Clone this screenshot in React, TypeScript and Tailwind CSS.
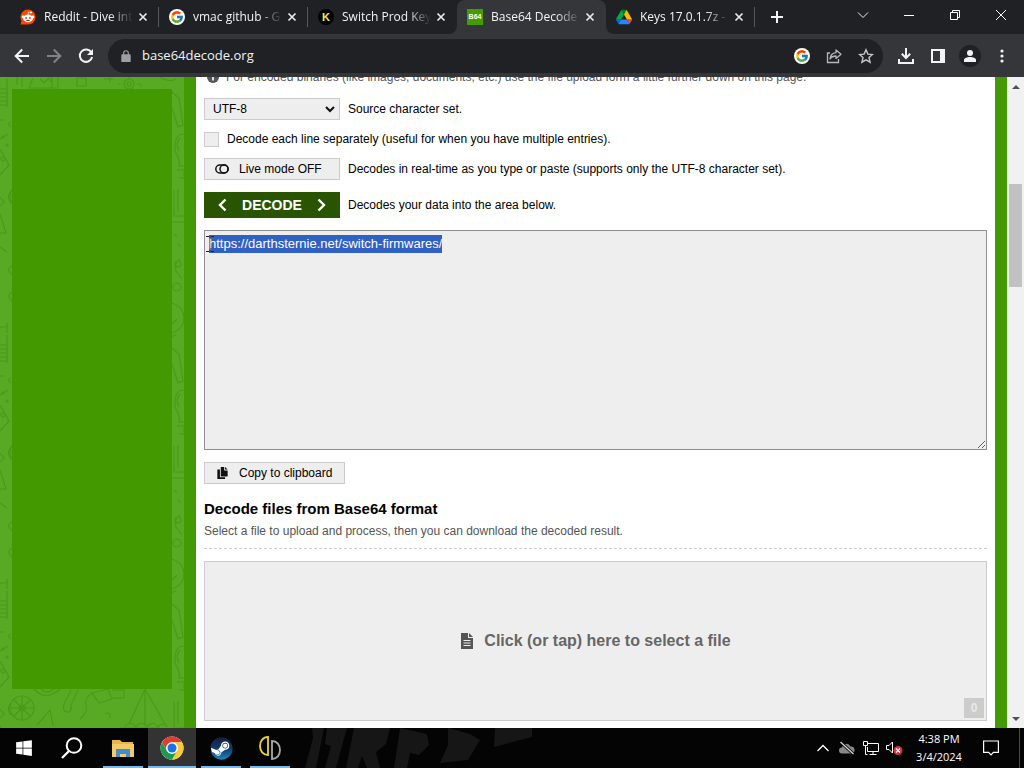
import { useEffect, useRef, type ReactNode } from 'react';
import { FcGoogle } from 'react-icons/fc';
import { FaWindows, FaSteam } from 'react-icons/fa';

type TabProps = { icon: ReactNode; title: string; active?: boolean; divider?: boolean };

function CloseGlyph() {
  return (
    <svg viewBox="0 0 16 16" className="size-4" fill="none" stroke="#e8eaed" strokeWidth="1.7">
      <path d="M4.500 4.500l7 7M11.500 4.500l-7 7" />
    </svg>
  );
}

function Tab({ icon, title, active, divider }: TabProps) {
  return (
    <div className={active ? 'relative flex w-[149px] items-center bg-[#35363a] rounded-t-lg pl-2.5' : 'flex w-[149px] items-center pl-2.5'}>
      {active && (
        <>
          <svg className="absolute bottom-0 -left-2 size-2" viewBox="0 0 8 8"><path d="M8 0v8H0A8 8 0 0 0 8 0z" fill="#35363a" /></svg>
          <svg className="absolute bottom-0 -right-2 size-2" viewBox="0 0 8 8"><path d="M0 0v8h8A8 8 0 0 1 0 0z" fill="#35363a" /></svg>
        </>
      )}
      <span className="flex size-4 shrink-0">{icon}</span>
      <span className="ml-2 min-w-0 flex-1 whitespace-nowrap text-xs text-[#f1f3f4] [mask-image:linear-gradient(to_right,black_72%,transparent_98%)]">
        {title}
      </span>
      <button aria-label={`Close ${title}`} className="mr-[7px] shrink-0"><CloseGlyph /></button>
      <span className={divider ? 'h-5 w-px bg-[#55575b]' : 'h-5 w-px'} />
    </div>
  );
}

function RedditIcon() {
  return (
    <svg viewBox="0 0 16 16" className="size-4">
      <circle cx="8" cy="8" r="7.6" fill="#ff4500" />
      <path d="M.5 15.600l1.500-5 5 5z" fill="#ff4500" />
      <circle cx="3.2" cy="7.8" r="1.5" fill="#fff" />
      <circle cx="12.8" cy="7.8" r="1.5" fill="#fff" />
      <ellipse cx="8" cy="9.4" rx="5" ry="3.8" fill="#fff" />
      <circle cx="11" cy="3.5" r="1.1" fill="#fff" />
      <path d="M8 5.8l.6-2.8 2.4.5" stroke="#fff" strokeWidth=".7" fill="none" />
      <circle cx="6.1" cy="8.9" r="1" fill="#ff4500" />
      <circle cx="9.9" cy="8.9" r="1" fill="#ff4500" />
      <path d="M5.6 11q2.4 2 4.8 0z" fill="#222" />
    </svg>
  );
}

function GoogleBadge() {
  return (
    <span className="flex size-4 items-center justify-center rounded-full bg-white">
      <FcGoogle className="size-3.5" />
    </span>
  );
}

function DriveIcon() {
  return (
    <svg viewBox="0 0 87.3 78" className="size-4">
      <path d="m6.6 66.85 3.85 6.65c.8 1.4 1.95 2.5 3.3 3.3l13.75-23.8h-27.5c0 1.55.4 3.1 1.2 4.5z" fill="#0066da" />
      <path d="m43.65 25-13.75-23.8c-1.35.8-2.5 1.9-3.3 3.3l-25.4 44a9.06 9.06 0 0 0-1.2 4.5h27.5z" fill="#00ac47" />
      <path d="m73.55 76.8c1.35-.8 2.5-1.9 3.3-3.3l1.6-2.75 7.65-13.25c.8-1.4 1.2-2.95 1.2-4.5h-27.5l5.85 11.5z" fill="#ea4335" />
      <path d="m43.65 25 13.75-23.8c-1.35-.8-2.9-1.2-4.5-1.2h-18.5c-1.6 0-3.15.45-4.5 1.2z" fill="#00832d" />
      <path d="m59.8 53h-32.3l-13.75 23.8c1.35.8 2.9 1.2 4.5 1.2h50.8c1.6 0 3.15-.45 4.5-1.2z" fill="#2684fc" />
      <path d="m73.4 26.5-12.7-22c-.8-1.4-1.95-2.5-3.3-3.3l-13.75 23.8 16.15 28h27.45c0-1.55-.4-3.1-1.2-4.5z" fill="#ffba00" />
    </svg>
  );
}

function TabStrip() {
  const control = 'flex h-[29px] w-[46px] items-center justify-center';
  return (
    <div className="flex h-[34px] bg-[#202124] pl-2.5">
      <Tab icon={<RedditIcon />} title="Reddit - Dive int" divider />
      <Tab icon={<GoogleBadge />} title="vmac github - G" divider />
      <Tab
        icon={<span className="flex size-4 items-center justify-center rounded-full bg-black font-['Liberation_Sans'] text-[11px] font-bold text-[#f4ee4a]">K</span>}
        title="Switch Prod Key"
      />
      <Tab
        active
        icon={<span className="flex size-4 items-center justify-center bg-[#459b00] font-['Liberation_Sans'] text-[7px] font-bold text-white">B64</span>}
        title="Base64 Decode"
      />
      <Tab icon={<DriveIcon />} title="Keys 17.0.1.7z -" divider />
      <button aria-label="New tab" className="ml-3 flex w-5 items-center justify-center">
        <svg viewBox="0 0 14 14" className="size-3.5" stroke="#f1f3f4" strokeWidth="2"><path d="M7 1v12M1 7h12" /></svg>
      </button>
      <div className="ml-auto flex">
        <button aria-label="Search tabs" className={control}>
          <svg viewBox="0 0 12 12" className="size-3" fill="none" stroke="#e8eaed"><path d="M1 3.500l5 5 5-5" /></svg>
        </button>
        <button aria-label="Minimize" className={control}>
          <svg viewBox="0 0 10 10" className="size-2.5" stroke="#fff"><path d="M0 5.500h10" /></svg>
        </button>
        <button aria-label="Restore" className={control}>
          <svg viewBox="0 0 10 10" className="size-2.5" fill="none" stroke="#fff"><path d="M.5 2.500h7v7h-7zM2.500 2.500v-2h7v7h-2" /></svg>
        </button>
        <button aria-label="Close window" className={control}>
          <svg viewBox="0 0 10 10" className="size-2.5" stroke="#fff"><path d="M0 0l10 10M10 0L0 10" /></svg>
        </button>
      </div>
    </div>
  );
}

function Toolbar() {
  const button = 'flex w-8 shrink-0 items-center justify-center self-stretch';
  return (
    <div className="flex h-[43px] items-center bg-[#35363a] px-1.5 text-[#f1f3f4]">
      <button aria-label="Back" className={button}>
        <svg viewBox="0 0 16 16" className="size-4" fill="none" stroke="currentColor" strokeWidth="2"><path d="M15 8H2M8.200 1.500L1.700 8l6.500 6.500" /></svg>
      </button>
      <button aria-label="Forward" className={button}>
        <svg viewBox="0 0 16 16" className="size-4" fill="none" stroke="#828387" strokeWidth="2"><path d="M1 8h13M7.800 1.500L14.300 8l-6.500 6.500" /></svg>
      </button>
      <button aria-label="Reload" className={button}>
        <svg viewBox="0 0 16 16" className="size-4" fill="none" stroke="currentColor" strokeWidth="2"><path d="M13.400 4.500A6.200 6.200 0 1 0 14.100 9" /><path d="M15 1v6H9z" fill="currentColor" stroke="none" /></svg>
      </button>
      <div className="ml-1.5 mr-[7px] flex h-[34px] flex-1 items-center rounded-full bg-[#202124] pr-px pl-3">
        <svg viewBox="0 0 12 14" className="size-3 shrink-0" fill="#9aa0a6"><path d="M1.500 5h9A1 1 0 0 1 11.500 6v7a1 1 0 0 1-1 1h-9a1 1 0 0 1-1-1V6a1 1 0 0 1 1-1z" /><path d="M3.300 5.500V3.600a2.700 2.700 0 0 1 5.400 0v1.900" fill="none" stroke="#9aa0a6" strokeWidth="1.400" /></svg>
        <input aria-label="Address" defaultValue="base64decode.org" className="ml-2.5 min-w-0 flex-1 bg-transparent text-[13px] text-[#f1f3f4] outline-none" />
        <button aria-label="Google" className={button}><GoogleBadge /></button>
        <button aria-label="Share" className={button}>
          <svg viewBox="0 0 16 16" className="size-4" fill="none" stroke="#b6b8bc" strokeWidth="1.300"><path d="M4 5H1.500v9.500h11V11" /><path d="M10 2l5 4.200-5 4.200V8C7 8 5.200 9 4 11c.3-3.500 2.500-6 6-6.400z" strokeLinejoin="round" /></svg>
        </button>
        <button aria-label="Bookmark" className={button}>
          <svg viewBox="0 0 16 16" className="size-4" fill="none" stroke="#c4c7c9" strokeWidth="1.400"><path d="M8 1.800l1.900 4.300 4.600.4-3.500 3.100 1.100 4.600L8 11.800l-4.100 2.400L5 9.600 1.500 6.500l4.600-.4z" /></svg>
        </button>
      </div>
      <button aria-label="Downloads" className={button}>
        <svg viewBox="0 0 16 16" className="size-4" fill="none" stroke="currentColor" strokeWidth="2"><path d="M8 0v9.500M3.800 5.800L8 10l4.200-4.200M1 11v4h14v-4" /></svg>
      </button>
      <button aria-label="Side panel" className={button}>
        <svg viewBox="0 0 14 14" className="size-3.5"><path d="M0 0h14v14H0zM2 2v10h7V2z" fill="currentColor" fillRule="evenodd" /></svg>
      </button>
      <button aria-label="Profile" className={button}>
        <span className="flex size-[22px] items-center justify-center rounded-full bg-[#202124]">
          <svg viewBox="0 0 12 12" className="size-3" fill="currentColor"><circle cx="6" cy="3" r="3" /><path d="M0 12v-2c0-2 3-3 6-3s6 1 6 3v2z" /></svg>
        </span>
      </button>
      <button aria-label="Menu" className={button}>
        <svg viewBox="0 0 4 16" className="h-4 w-1" fill="currentColor"><circle cx="2" cy="3" r="1.600" /><circle cx="2" cy="8" r="1.600" /><circle cx="2" cy="13" r="1.600" /></svg>
      </button>
    </div>
  );
}

function DoodlePattern() {
  return (
    <svg className="absolute inset-0 size-full" aria-hidden="true">
      <defs>
        <pattern id="doodles" width="184" height="256" patternUnits="userSpaceOnUse">
          <rect width="184" height="256" fill="#58aa24" />
          <g fill="none" stroke="#489b18" strokeWidth="1.200">
            {/* top edge */}
            <path d="M17 0v8M22 0v10M52 0v11M58 0v11H29l4-10M40 2l4 4 5-5 3 5M77 1h9v8h-9zM104 2h9M110 0v5M140 9h2M160 0q8 6 16 2" />
            <circle cx="129" cy="7" r="5" /><circle cx="129" cy="7" r="2" /><path d="M121 7h-3M137 7h4M129 0v2" />
            {/* left edge */}
            <path d="M0 12h7M0 16h7M0 20h7M0 24h7M0 28h7M7 2v28M0 43h4M11 45q-5 2 0 5M0 62l8-5M0 72l9 16-9 10M0 120l4 5-4 4M0 137l6 19H0M11 114q-5 6 0 12M12 188l-4 5 4 5M12 215q-6 4 0 9M0 170l7 5M0 250h7M7 246v10" />
            <circle cx="3" cy="60" r="1" /><circle cx="7" cy="68" r="1" /><circle cx="3" cy="82" r="2" />
            {/* right edge */}
            <path d="M172 15l7 6 4 27-5 2-6-19M184 57q-10 0-9 15c0 6 6 8 4 17h5M180 61q-5 5-1 13M177 93h7v8h-5M174 113v26h10M178 112v23M172 145h12M174 157l3 3M178 166l2 4M180 182q-6 4-4 12l6 8" />
            <circle cx="178" cy="187" r="3" /><circle cx="177" cy="210" r="4" /><circle cx="169" cy="241" r="15" /><path d="M172 247l5-5" />
            {/* bottom edge */}
            <circle cx="22" cy="119" r="12" /><circle cx="22" cy="119" r="3" />
            <path d="M22 107v24M10 119h24M14 111l16 16M30 111l-16 16M34 100q12 13 26 0M41 100q6 6 13 0M71 101l-7 14q-2 7 3 8t4-7l7-15M37 136l13-15 3 16M92 104q-8 5-6 12t-6 14M92 104l16-4 4 10-13 4zM112 101h12v8h-12M105 124q8 0 4 5M125 138c2-5 8-5 11 0 3-5 8-5 11 0 4-5 8-5 11 0 3-4 7-4 9 0M145 100l-16 35M145 100v36M145 100l20 35M120 139h40" />
          </g>
        </pattern>
      </defs>
      <rect width="100%" height="100%" fill="url(#doodles)" />
    </svg>
  );
}

function ResultArea() {
  const area = useRef<HTMLTextAreaElement>(null);
  useEffect(() => {
    area.current?.focus({ preventScroll: true });
    area.current?.select();
  }, []);
  return (
    <div className="relative mt-3 flex">
      <textarea
        ref={area}
        aria-label="Decoded result"
        spellCheck={false}
        defaultValue="https://darthsternie.net/switch-firmwares/"
        className="h-[220px] w-full border border-[#8f8f8f] bg-[#eee] px-1 py-1 text-[13px] leading-[18px] text-black outline-none selection:bg-[#3160c4] selection:text-white"
      />
      <svg className="absolute top-1.5 left-0.5 h-4 w-2" viewBox="0 0 8 16" fill="none" aria-hidden="true">
        <path d="M4 1.500v13" stroke="#d98a4c" />
        <path d="M0 .5h3l1 1 1-1h3M0 15.500h3l1-1 1 1h3" stroke="#222" />
      </svg>
    </div>
  );
}

function DecodePage() {
  const control = 'flex h-[22px] items-center border border-[#ccc] bg-[#eee]';
  return (
    <main className="min-w-0 flex-1 overflow-hidden border-x-[12px] border-[#439a04] bg-white px-2 font-['Liberation_Sans',Arial,sans-serif] text-xs leading-[18px] text-black">
      <div className="flex h-[9px] items-end overflow-hidden text-[#555]">
        <svg viewBox="0 0 12 12" className="mb-[3px] ml-[3px] size-3 shrink-0"><circle cx="6" cy="6" r="6" fill="#555" /><path d="M6 5v4.500M6 2.200v1.600" stroke="#fff" strokeWidth="1.600" /></svg>
        <p className="ml-[7px] whitespace-nowrap">For encoded binaries (like images, documents, etc.) use the file upload form a little further down on this page.</p>
      </div>
      <div className="mt-3 flex items-center gap-2">
        <div className="relative flex w-[136px]">
          <select id="charset" className="h-[22px] w-full appearance-none border border-[#ccc] bg-[#eee] pl-2">
            <option>UTF-8</option>
          </select>
          <svg viewBox="0 0 10 7" className="pointer-events-none absolute top-2 right-[5px] h-[7px] w-2.5" fill="none" stroke="#111" strokeWidth="2"><path d="M1 1l4 4 4-4" /></svg>
        </div>
        <label htmlFor="charset">Source character set.</label>
      </div>
      <div className="mt-2.5 flex items-center gap-2">
        <input id="lines" type="checkbox" className="size-[15px] appearance-none border border-[#ccc] bg-[#eee]" />
        <label htmlFor="lines">Decode each line separately (useful for when you have multiple entries).</label>
      </div>
      <div className="mt-2.5 flex items-center gap-2">
        <button className={`${control} w-[136px] pl-2.5`}>
          <svg viewBox="0 0 14 10" className="h-2.5 w-3.5" fill="none" stroke="#111" strokeWidth="1.500"><rect x=".8" y="1" width="12.400" height="8" rx="4" /><ellipse cx="9" cy="5" rx="4" ry="4" /></svg>
          <span className="ml-2.5">Live mode OFF</span>
        </button>
        <span>Decodes in real-time as you type or paste (supports only the UTF-8 character set).</span>
      </div>
      <div className="mt-3 flex items-center gap-2">
        <button className="flex h-[26px] w-[136px] items-center justify-between bg-[#2a5500] px-3.5 text-sm font-bold text-white">
          <svg viewBox="0 0 9 14" className="h-3.5 w-[9px]" fill="none" stroke="#fff" strokeWidth="2.400"><path d="M7.500 1.500L2 7l5.500 5.500" /></svg>
          DECODE
          <svg viewBox="0 0 9 14" className="h-3.5 w-[9px]" fill="none" stroke="#fff" strokeWidth="2.400"><path d="M1.500 1.500L7 7l-5.500 5.500" /></svg>
        </button>
        <span>Decodes your data into the area below.</span>
      </div>
      <ResultArea />
      <button className={`${control} mt-3 w-[141px] pl-3`}>
        <svg viewBox="0 0 12 14" className="h-3 w-[11px]" fill="#111"><path d="M4 0h4v4h4v7H4z" /><path d="M9 0l3 3H9zM0 3h3v9h6v2H0z" /></svg>
        <span className="ml-[11px]">Copy to clipboard</span>
      </button>
      <h2 className="mt-4 text-[15px] leading-[18px] font-bold">Decode files from Base64 format</h2>
      <p className="mt-1 text-[#555]">Select a file to upload and process, then you can download the decoded result.</p>
      <div className="mt-2 border-t border-dashed border-[#ccc]" />
      <button className="relative mt-3 flex h-40 w-full items-center justify-center gap-2.5 border border-[#ccc] bg-[#eee] text-base font-bold text-[#666]">
        <svg viewBox="0 0 12 16" className="h-4 w-3.5"><path d="M0 0h7v5h5v11H0z" fill="#555" /><path d="M8 0l4 4H8z" fill="#555" /><path d="M2.500 7.500h7M2.500 10h7M2.500 12.500h7" stroke="#eee" /></svg>
        Click (or tap) here to select a file
        <span className="absolute right-0.5 bottom-0.5 flex size-5 items-center justify-center bg-[#ccc] text-xs text-[#e9e9e9]">0</span>
      </button>
    </main>
  );
}

function Scrollbar() {
  return (
    <div className="flex w-[17px] shrink-0 flex-col items-center bg-[#f1f1f1]" aria-hidden="true">
      <svg viewBox="0 0 8 4" className="mt-2 h-1 w-2" fill="#505050"><path d="M0 4l4-4 4 4z" /></svg>
      <div className="mt-[95px] h-[103px] w-[13px] bg-[#c1c1c1]" />
      <svg viewBox="0 0 8 4" className="mt-auto mb-[7px] h-1 w-2" fill="#505050"><path d="M0 0l4 4 4-4z" /></svg>
    </div>
  );
}

function Taskbar() {
  const app = 'flex w-10 items-center justify-center border-y-2 border-t-transparent border-b-[#76b9ed]';
  return (
    <footer className="relative flex h-10 shrink-0 overflow-hidden bg-[#040404] text-white">
      <svg className="absolute left-[290px] h-10 w-72" viewBox="0 0 288 40" fill="#161616" aria-hidden="true">
        <path d="M22 0h12l-8 40H15l8-30zM37 0h20L46 40H35l6-22-6-2zM64 0h36l-4 16-10 8 4 16H77l-5-12-4 12H56zM110 0l27 6 2 11-10 10-9-2-3 15H104zM158 0l22 6 10 6-12 20-28 3 8-18zM205 0h37v9l-38 10z" />
      </svg>
      <nav className="relative flex">
        <button aria-label="Start" className="flex w-12 items-center justify-center"><FaWindows className="size-[18px]" /></button>
        <button aria-label="Search" className="flex w-12 items-center justify-center">
          <svg viewBox="0 0 22 22" className="size-[22px]" fill="none" stroke="#fff" strokeWidth="2"><circle cx="13" cy="8.500" r="7.300" /><path d="M8 14l-7 7" strokeWidth="2.300" /></svg>
        </button>
        <button aria-label="File Explorer" className={`${app} ml-[7px]`}>
          <svg viewBox="0 0 22 18" className="h-[18px] w-[22px]"><path d="M0 1h8l2 2h11v14H0z" fill="#e9b44c" /><path d="M0 5h22v13H0z" fill="#f5cb69" /><path d="M4 18v-8h14v8h-4v-3H8v3z" fill="#3f8fce" /></svg>
        </button>
        <button aria-label="Chrome" className="ml-[5px] flex w-12 items-center justify-center border-y-2 border-t-[#333] border-b-[#76b9ed] bg-[#333]">
          <svg viewBox="0 0 48 48" className="size-6">
            <circle cx="24" cy="24" r="23" fill="#fff" />
            <path d="M4.080 12.500A23 23 0 0 1 43.920 12.500H24A11.500 11.500 0 0 0 14.040 29.750z" fill="#e33b2e" />
            <path d="M43.920 12.500A23 23 0 0 1 24 47L33.960 29.750A11.500 11.500 0 0 0 24 12.500z" fill="#fcc934" />
            <path d="M24 47A23 23 0 0 1 4.080 12.500L14.040 29.750A11.500 11.500 0 0 0 33.960 29.750z" fill="#1e9b4f" />
            <circle cx="24" cy="24" r="11.500" fill="#fff" /><circle cx="24" cy="24" r="9" fill="#1a73e8" />
          </svg>
        </button>
        <button aria-label="Steam" className={`${app} ml-[5px]`}>
          <span className="flex size-[21px] items-center justify-center rounded-full bg-white">
            <svg width="0" height="0" aria-hidden="true"><defs><linearGradient id="steam" x1="0" y1="0" x2="0" y2="1"><stop offset="0" stopColor="#151d40" /><stop offset=".5" stopColor="#123a6c" /><stop offset="1" stopColor="#1c86c0" /></linearGradient></defs></svg>
            <FaSteam className="size-[23px] shrink-0 fill-[url(#steam)]" />
          </span>
        </button>
        <button aria-label="Ryujinx" className={`${app} ml-[9px]`}>
          <svg viewBox="0 0 22 24" className="h-6 w-[22px]" fill="none" strokeWidth="1.800"><path d="M9 1v18C4 19 1 15 1 10s3-9 8-9z" stroke="#e8d72c" /><path d="M13 5v18c5 0 8-4 8-9s-3-9-8-9z" stroke="#a9a9a9" /></svg>
        </button>
      </nav>
      <div className="relative ml-auto flex items-center">
        <button aria-label="Show hidden icons" className="flex w-6 justify-center">
          <svg viewBox="0 0 12 8" className="h-2 w-3" fill="none" stroke="#fff" strokeWidth="1.300"><path d="M.5 7L6 1.500 11.500 7" /></svg>
        </button>
        <button aria-label="OneDrive" className="flex w-6 justify-center">
          <svg viewBox="0 0 16 14" className="h-3.5 w-4"><path d="M3 12.500a3 3 0 0 1 0-6A4.500 4.500 0 0 1 11.500 5.500a3.500 3.500 0 0 1 1 7z" fill="#85878a" /><path d="M1.500 1l13 12" stroke="#040404" strokeWidth="3" /><path d="M1.500 1l13 12" stroke="#ddd" strokeWidth="1.200" /></svg>
        </button>
        <button aria-label="Network" className="flex w-6 justify-center">
          <svg viewBox="0 0 16 14" className="h-3.5 w-4" fill="none" stroke="#fff"><path d="M5 2.500h10.500v8H4.500V6M10 10.500v3M6.500 13.500h7M.5.500h4v4h-4zM2.500 4.500v9h2" /></svg>
        </button>
        <button aria-label="Volume muted" className="flex w-[23px] justify-center">
          <svg viewBox="0 0 17 14" className="h-3.5 w-[17px]" fill="none"><path d="M.5 4.500H3L6.500 1v11L3 8.500H.5z" stroke="#fff" /><circle cx="12" cy="9.500" r="4.500" fill="#d9313d" /><path d="M10 7.500l4 4M14 7.500l-4 4" stroke="#fff" strokeWidth="1.200" /></svg>
        </button>
        <div className="w-[66px] text-center text-[11px] leading-[18px]">
          <div>4:38 PM</div>
          <div>3/4/2024</div>
        </div>
        <button aria-label="Notifications" className="flex w-[38px] justify-center">
          <svg viewBox="0 0 16 16" className="size-4" fill="none" stroke="#fff" strokeWidth="1.200"><path d="M.6 1h14.800v11.400h-5L8 14.800l-2.400-2.400h-5z" /></svg>
        </button>
        <span className="mr-1 ml-[9px] h-10 w-px bg-[#4a4a4a]" />
      </div>
    </footer>
  );
}

export default function App() {
  return (
    <div className="flex h-screen flex-col overflow-hidden font-['Open_Sans','Noto_Sans',sans-serif]">
      <header className="shrink-0">
        <TabStrip />
        <Toolbar />
      </header>
      <div className="flex min-h-0 flex-1 overflow-hidden">
        <aside className="relative w-[184px] shrink-0 p-3">
          <DoodlePattern />
          <div className="relative h-[600px] bg-[#439a00]" />
        </aside>
        <DecodePage />
        <Scrollbar />
      </div>
      <Taskbar />
    </div>
  );
}
